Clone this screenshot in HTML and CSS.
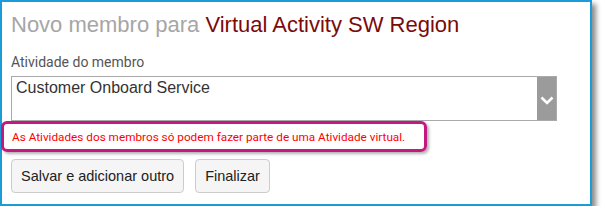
FILE: index.html
```html
<!DOCTYPE html>
<html lang="pt">
<head>
  <meta charset="UTF-8">
  <title>Novo membro</title>
  <link rel="stylesheet" href="styles.css">
</head>
<body>

<div class="panel">
  <h1 class="title">Novo membro para <span class="parent">Virtual Activity SW Region</span></h1>

  <label class="field-label" for="memberActivity">Atividade do membro</label>
  <div class="select-box" id="memberActivity">
    <span class="select-value">Customer Onboard Service</span>
    <span class="select-arrow">
      <svg width="14" height="9" viewBox="0 0 14 9"><path d="M1.5 1.5 L7 7 L12.5 1.5" fill="none" stroke="#fff" stroke-width="2.6"/></svg>
    </span>
  </div>

  <p class="error-msg">As Atividades dos membros só podem fazer parte de uma Atividade virtual.</p>

  <div class="actions">
    <button class="btn">Salvar e adicionar outro</button>
    <button class="btn">Finalizar</button>
  </div>
</div>

</body>
</html>
```

FILE: styles.css
```css
* {margin:0;padding:0;box-sizing:border-box}
body {
  background:#fff;
  font-family:"Liberation Sans", Arial, sans-serif;
}
.panel {
  width:592px;
  height:206px;
  border:2px solid #1b9bd7;
  background:#fff;
  box-shadow:4px 4px 5px rgba(0,0,0,0.45);
  padding:11px 9px 0 9px;
}
.title {
  font-size:22px;
  font-weight:normal;
  line-height:24px;
  color:#a6a6a6;
}
.title .parent {color:#7b0a0a;}

.field-label {
  display:block;
  margin-top:17px;
  font-family:Roboto, sans-serif;
  font-size:14px;
  line-height:16px;
  color:#555;
}
.select-box {
  margin-top:6px;
  width:546px;
  height:45px;
  border:1px solid #aaa;
  display:flex;
  justify-content:space-between;
}
.select-value {
  padding:2px 0 0 4px;
  font-size:16px;
  line-height:18px;
  color:#333;
}
.select-arrow {
  width:19px;
  background:#9b9b9b;
  display:flex;
  align-items:center;
  justify-content:center;
  padding-top:3px;
}

.error-msg {
  display:inline-block;
  margin:0 0 0 -10px;
  width:426px;
  height:31px;
  padding:6px 0 0 8px;
  border:3px solid #c21a80;
  border-radius:6px;
  box-shadow:2px 2px 3px rgba(0,0,0,0.3);
  font-family:Roboto, sans-serif;
  font-size:11.75px;
  line-height:14px;
  color:#f00;
}

.actions {
  display:flex;
  gap:11px;
  margin-top:7px;
}
.btn {
  height:34px;
  padding:0 9px;
  background:#f5f5f5;
  border:1px solid #ccc;
  border-radius:4px;
  font-family:"Liberation Sans", Arial, sans-serif;
  font-size:14.5px;
  color:#222;
}
```
